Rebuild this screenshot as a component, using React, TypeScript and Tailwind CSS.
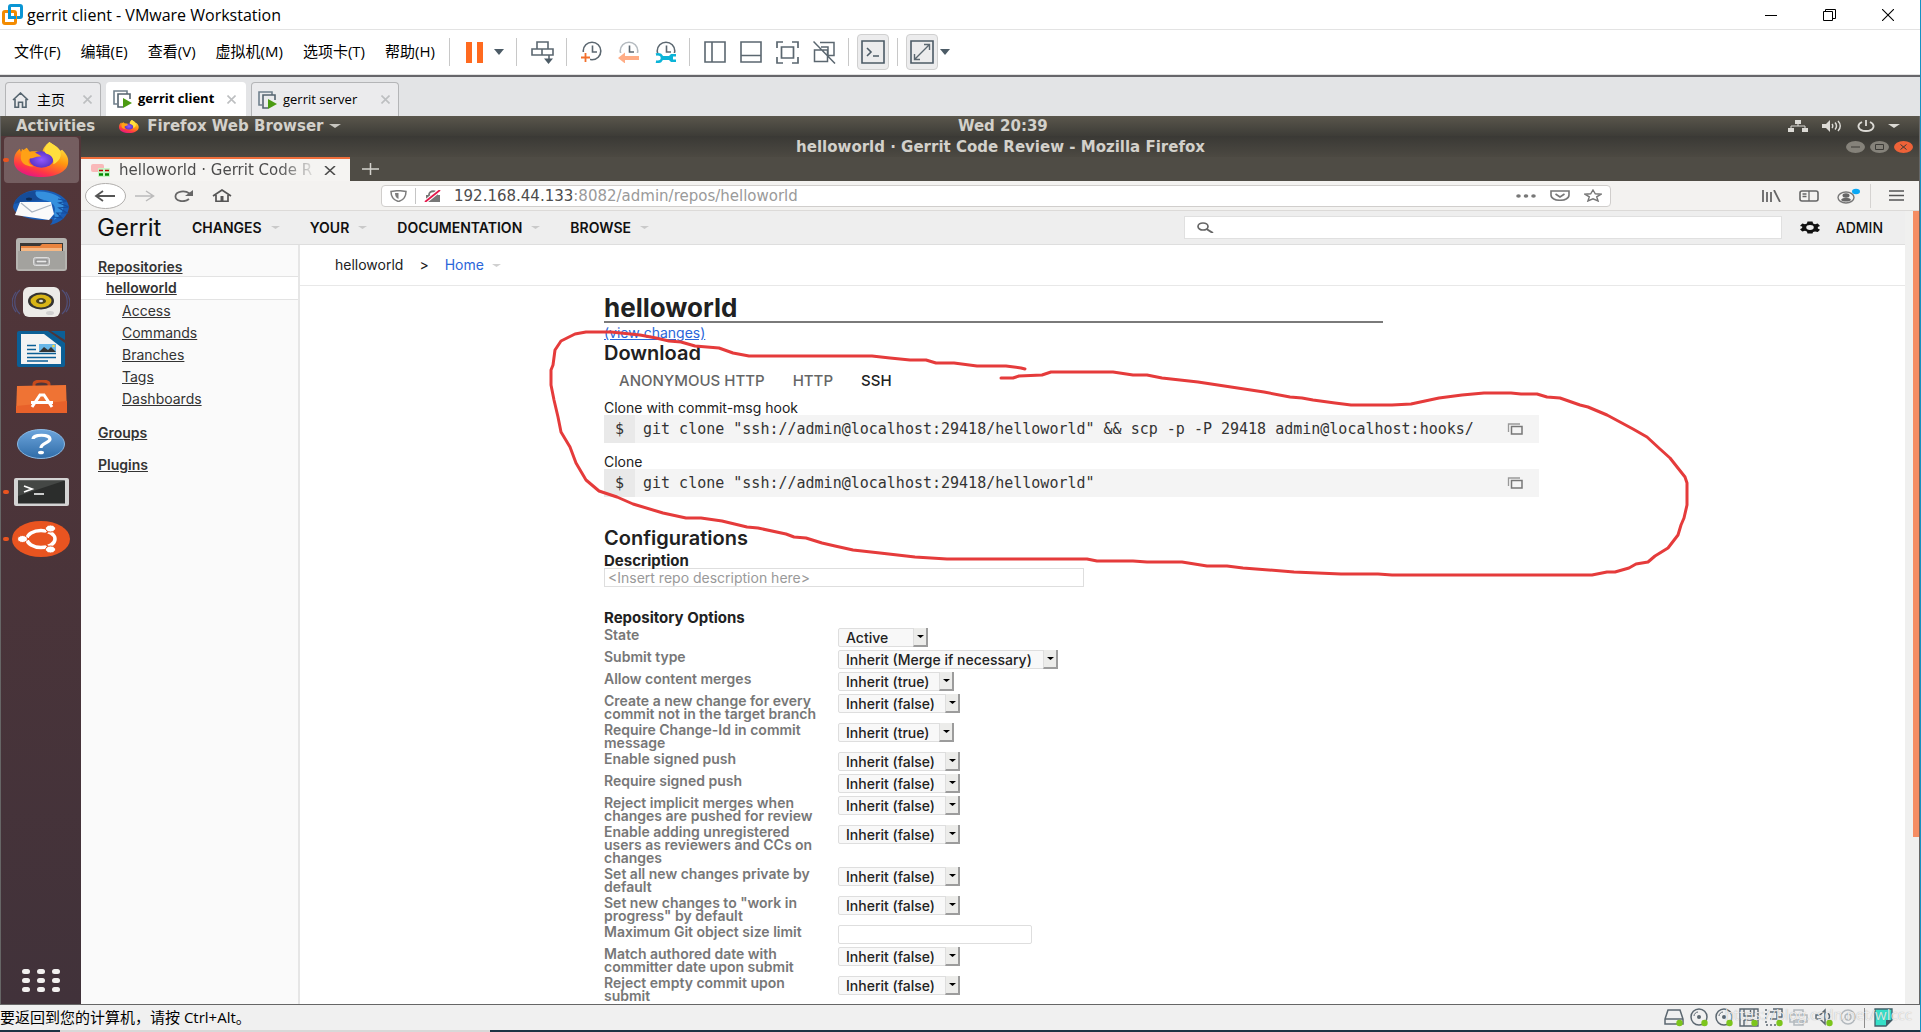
import type { ReactNode } from 'react';

const TOOL = '#5b6770';

const menus = ['文件(F)', '编辑(E)', '查看(V)', '虚拟机(M)', '选项卡(T)', '帮助(H)'];

const booleanOptions = ['Inherit (false)', 'Inherit (true)', 'true', 'false'];

type Option = { label: string; value?: string; width?: string };

const repoOptions: Option[] = [
  { label: 'State', value: 'Active', width: 'w-[90px]' },
  { label: 'Submit type', value: 'Inherit (Merge if necessary)', width: 'w-[220px]' },
  { label: 'Allow content merges', value: 'Inherit (true)', width: 'w-[116px]' },
  { label: 'Create a new change for every commit not in the target branch', value: 'Inherit (false)', width: 'w-[122px]' },
  { label: 'Require Change-Id in commit message', value: 'Inherit (true)', width: 'w-[116px]' },
  { label: 'Enable signed push', value: 'Inherit (false)', width: 'w-[122px]' },
  { label: 'Require signed push', value: 'Inherit (false)', width: 'w-[122px]' },
  { label: 'Reject implicit merges when changes are pushed for review', value: 'Inherit (false)', width: 'w-[122px]' },
  { label: 'Enable adding unregistered users as reviewers and CCs on changes', value: 'Inherit (false)', width: 'w-[122px]' },
  { label: 'Set all new changes private by default', value: 'Inherit (false)', width: 'w-[122px]' },
  { label: 'Set new changes to "work in progress" by default', value: 'Inherit (false)', width: 'w-[122px]' },
  { label: 'Maximum Git object size limit' },
  { label: 'Match authored date with committer date upon submit', value: 'Inherit (false)', width: 'w-[122px]' },
  { label: 'Reject empty commit upon submit', value: 'Inherit (false)', width: 'w-[122px]' },
];

function Svg({ w, h, children, box }: { w: number; h: number; children: ReactNode; box?: string }) {
  return (
    <svg width={w} height={h} viewBox={box ?? `0 0 ${w} ${h}`} preserveAspectRatio="none" fill="none" className="block shrink-0" aria-hidden="true">
      {children}
    </svg>
  );
}

function Caret({ color = '#d0d0d0', w = 9, h = 5 }: { color?: string; w?: number; h?: number }) {
  return (
    <Svg w={w} h={h} box="0 0 10 5">
      <path d="M0 0h10L5 5z" fill={color} />
    </Svg>
  );
}

function Separator() {
  return <div className="h-7 w-px shrink-0 bg-[#c8c8c8]" />;
}

/* ---------- VMware window ---------- */

function TitleBar() {
  return (
    <header className="flex h-[30px] shrink-0 items-center border-b border-[#e3e3e3] bg-white pl-0.5">
      <Svg w={21} h={21}>
        <rect x="7.5" y="1.5" width="12" height="12" rx="1.5" stroke="#0a95d4" strokeWidth="3" />
        <rect x="1.5" y="7.5" width="12" height="12" rx="1.5" stroke="#f38b00" strokeWidth="3" />
        <path d="M7.5 6v7.5H14" stroke="#0a95d4" strokeWidth="3" />
      </Svg>
      <h1 className="ml-1 grow text-base text-black">gerrit client - VMware Workstation</h1>
      <div className="flex items-center pr-[26px]">
        <button aria-label="Minimize" className="mr-[46px]">
          <Svg w={12} h={12}><path d="M0 6.5h12" stroke="#000" /></Svg>
        </button>
        <button aria-label="Restore" className="mr-[46px]">
          <Svg w={13} h={12}><path d="M.5 2.5h9v9h-9zM2.5 2.5v-2h10v9h-3" stroke="#000" /></Svg>
        </button>
        <button aria-label="Close">
          <Svg w={12} h={12}><path d="M0 0l12 12M12 0L0 12" stroke="#000" strokeWidth="1.1" /></Svg>
        </button>
      </div>
    </header>
  );
}

function Clock({ faded }: { faded?: boolean }) {
  return (
    <>
      <circle cx="11" cy="10" r="8.8" stroke={faded ? '#b5bbc0' : TOOL} strokeWidth="1.6" />
      <path d="M11.5 4.5V11h4.5" stroke={TOOL} strokeWidth="1.6" />
    </>
  );
}

function Toolbar() {
  return (
    <div className="flex h-[45px] shrink-0 items-center border-b border-[#e3e3e3] bg-white pl-3.5">
      <nav className="flex gap-5 pb-0.5 text-[15px] text-black">
        {menus.map((menu) => (
          <button key={menu}>{menu}</button>
        ))}
      </nav>
      <div className="ml-3.5 flex items-center">
        <Separator />
        <button aria-label="Pause" className="ml-4">
          <Svg w={18} h={21}><path d="M0 0h6v21H0zM11 0h6v21h-6z" fill="#ff6a1f" /></Svg>
        </button>
        <button aria-label="Power menu" className="mr-3 ml-2.5"><Caret color="#4c5b66" w={10} h={6} /></button>
        <Separator />
        <button aria-label="Send Ctrl+Alt+Del" className="mr-3 ml-3.5">
          <Svg w={23} h={23}>
            <path d="M6 1h11v7H6zM1 8h10v6H1zM11 8h11v6H11zM18 14v6" stroke={TOOL} strokeWidth="1.6" />
            <path d="M13 17.5h9L17.5 23z" fill="#4c5b66" />
          </Svg>
        </button>
        <Separator />
        <div className="mr-3 ml-3.5 flex gap-[15px]">
          <button aria-label="Take snapshot">
            <Svg w={22} h={22}>
              <Clock />
              <path d="M0 11h9v10H0z" fill="#fff" />
              <path d="M4.5 12v9M0 16.5h9" stroke="#f2702c" strokeWidth="1.8" />
            </Svg>
          </button>
          <button aria-label="Revert snapshot">
            <Svg w={22} h={22}>
              <Clock faded />
              <path d="M0 12h22v10H0z" fill="#fff" />
              <path d="M7 11.5V15h14v4H7v3.5L0 17z" fill="#ffad86" />
            </Svg>
          </button>
          <button aria-label="Manage snapshots">
            <Svg w={22} h={22}>
              <Clock />
              <path d="M0 12h22v10H0z" fill="#fff" />
              <path d="M1 13.500c4-1 6 1 6 3.500s-2 4.500-6 3.500" stroke="#0bb4d8" strokeWidth="2.600" />
              <path d="M7 15h7l2-2h5v2.500h-3v3h3V21h-5l-2-2H7z" fill="#0bb4d8" />
            </Svg>
          </button>
        </div>
        <Separator />
        <div className="mr-3 ml-3.5 flex gap-3.5">
          <button aria-label="Show library">
            <Svg w={22} h={22}><path d="M1 1h20v20H1zM8 1v20" stroke={TOOL} strokeWidth="1.6" /></Svg>
          </button>
          <button aria-label="Show thumbnails">
            <Svg w={22} h={22}><path d="M1 1h20v20H1zM1 14.500h20" stroke={TOOL} strokeWidth="1.6" /></Svg>
          </button>
          <button aria-label="Full screen">
            <Svg w={23} h={23}>
              <path d="M1 7V1h6M16 1h6v6M22 16v6h-6M7 22H1v-6M5.500 6h12v11h-12z" stroke={TOOL} strokeWidth="1.7" />
            </Svg>
          </button>
          <button aria-label="Unity">
            <Svg w={23} h={23}>
              <path d="M7 1.500h14v13h-6M1.500 9v11.500h13V9zM8 6h7v8M.500.500l21.500 22" stroke={TOOL} strokeWidth="1.5" />
            </Svg>
          </button>
        </div>
        <Separator />
        <button aria-label="Console view" className="mr-2 ml-2 rounded border border-[#d0d0d0] bg-[#ececed] px-[3px] py-[5px]">
          <Svg w={24} h={24}>
            <path d="M1 1h22v22H1z" stroke="#4c5b66" strokeWidth="1.6" />
            <path d="M6 8l4 4-4 4M12 16h6" stroke="#4c5b66" strokeWidth="1.6" />
          </Svg>
        </button>
        <Separator />
        <button aria-label="Stretch guest" className="mr-0.5 ml-2 rounded border border-[#d0d0d0] bg-[#ececed] px-[3px] py-[5px]">
          <Svg w={24} h={24}>
            <path d="M1 1h22v22H1z" stroke="#4c5b66" strokeWidth="1.6" />
            <path d="M14 4.500h5.500V10M10 19.500H4.500V14M19 5L5 19" stroke={TOOL} strokeWidth="1.4" />
          </Svg>
        </button>
        <button aria-label="Stretch menu"><Caret color="#4c5b66" w={10} h={6} /></button>
      </div>
    </div>
  );
}

function MachineIcon() {
  return (
    <Svg w={19} h={18}>
      <path d="M4 14H1V1h13v3" stroke="#70808c" strokeWidth="1.6" />
      <path d="M10 17H5V4h12v5" stroke="#55646f" strokeWidth="1.6" />
      <path d="M10 8l9 5-9 5z" fill="#4b9b12" />
    </Svg>
  );
}

function TabClose() {
  return (
    <button aria-label="Close tab">
      <Svg w={9} h={9}><path d="M.500.500l8 8M8.500.500l-8 8" stroke="#bdbfc1" strokeWidth="1.6" /></Svg>
    </button>
  );
}

function MachineTabs() {
  return (
    <div className="flex h-[41px] shrink-0 items-end border-t-2 border-[#66666a] bg-[#e3e4e6] pl-[5px] text-[13px] text-black">
      <div className="flex h-[34px] w-[96px] items-center rounded-t border border-b-0 border-[#b4b5b7] bg-[#ebebed] pr-2 pl-1.5">
        <Svg w={17} h={16}>
          <path d="M1 8l7.500-7L16 8M3 7v8.200h3.500v-5h4v5H14V7" stroke="#55646f" strokeWidth="1.6" />
        </Svg>
        <span className="ml-2 grow text-[14px]">主页</span>
        <TabClose />
      </div>
      <div className="ml-[5px] flex h-[34px] w-[140px] items-center rounded-t bg-white pr-2.5 pl-[7px] font-bold">
        <MachineIcon />
        <span className="ml-1.5 grow">gerrit client</span>
        <TabClose />
      </div>
      <div className="ml-[5px] flex h-[34px] w-[148px] items-center rounded-t border border-b-0 border-[#b4b5b7] bg-[#ebebed] pr-2 pl-1.5">
        <MachineIcon />
        <span className="ml-1.5 grow">gerrit server</span>
        <TabClose />
      </div>
    </div>
  );
}

/* ---------- Ubuntu guest ---------- */

function FirefoxLogo({ w, h }: { w: number; h: number }) {
  return (
    <Svg w={w} h={h} box="0 0 56 36">
      <defs>
        <linearGradient id="fx" x1="0.800" y1="0" x2="0.300" y2="1">
          <stop offset="0" stopColor="#fff04a" />
          <stop offset="0.450" stopColor="#ff980e" />
          <stop offset="0.800" stopColor="#ff3647" />
          <stop offset="1" stopColor="#e31587" />
        </linearGradient>
        <radialGradient id="fxCore">
          <stop offset="0" stopColor="#9059ff" />
          <stop offset="1" stopColor="#5b35c8" />
        </radialGradient>
      </defs>
      <path d="M36 0c4 3 9 5 11 9l2-1c5 5 7 9 6 14-1 8-12 14-27 14S0 30 0 20c0-6 2-10 6-13l1 3 6-4 3 4c5-1 9 0 13 1 0-4 3-8 7-11z" fill="url(#fx)" />
      <ellipse cx="28" cy="18" rx="12" ry="8.500" fill="url(#fxCore)" />
      <path d="M8 7c5 5 12 1 20 8-5-1-8 2-12 2-3 3 0 7 5 8-9 1-15-4-14-10z" fill="#ffa116" />
      <path d="M36 0c4 3 9 5 11 9 2 6-1 11-7 14 1-6-2-10-7-11-5-3 0-8 3-12z" fill="#ffdf3d" />
    </Svg>
  );
}

function TopBar() {
  return (
    <div className="grid h-5 shrink-0 grid-cols-[21fr_auto_19fr] items-center bg-linear-to-b from-[#5a564c] to-[#3d3c37] pr-[19px] pl-[15px] font-['DejaVu_Sans',sans-serif] text-[15px] leading-5 font-bold text-[#d3d1cb]">
      <div className="flex items-center">
        <button>Activities</button>
        <button className="ml-6 flex items-center">
          <FirefoxLogo w={20} h={13} />
          <span className="mr-1.5 ml-2">Firefox Web Browser</span>
          <Caret color="#c8c6c0" w={12} h={4} />
        </button>
      </div>
      <button>Wed 20:39</button>
      <div className="flex items-center justify-end">
        <Svg w={20} h={12} box="0 0 20 12">
          <path d="M7 0h6v4H7zM0 8h6v4H0zM14 8h6v4h-6z" fill="#dcdad5" />
          <path d="M10 4v2M3 8V6h14v2" stroke="#dcdad5" />
        </Svg>
        <div className="mr-[15px] ml-3.5">
          <Svg w={20} h={12}>
            <path d="M0 4h4l4-4v12L4 8H0z" fill="#dcdad5" />
            <path d="M10 4c1 1 1 3 0 4M13 2.500c2 2 2 5 0 7M16 1c3 3 3 7 0 10" stroke="#dcdad5" strokeWidth="1.500" />
          </Svg>
        </div>
        <Svg w={18} h={12}>
          <path d="M5 2C-1 5 1 11 9 11s10-6 4-9M9 0v6" stroke="#dcdad5" strokeWidth="1.800" />
        </Svg>
        <div className="ml-[13px]"><Caret color="#dcdad5" w={12} h={4} /></div>
      </div>
    </div>
  );
}

const dockApps: { name: string; active?: boolean; running?: boolean; icon: ReactNode }[] = [
  { name: 'Firefox', active: true, running: true, icon: <FirefoxLogo w={55} h={35} /> },
  {
    name: 'Thunderbird',
    icon: (
      <Svg w={58} h={35}>
        <path d="M1 17C2 8 12 1 24 0c18-1 32 7 33 17-1 9-8 16-19 18 2-2 3-4 2-6-12 3-37-1-39-12z" fill="#1a5db6" />
        <path d="M22 2c14-2 27 4 29 10 2 7-2 14-9 18 1-3 1-5 0-6 3-8-1-13-12-14-7-3-9-5-8-8z" fill="#3590de" />
        <path d="M46 9l9 2-8 2 10 4-10 1 8 5-10 0 5 5-9-1" stroke="#154d9c" strokeWidth="1.200" />
        <path d="M2 14C5 6 13 1 24 1c-2 4 2 8 8 9-10 1-17 1-22 2z" fill="#164c98" />
        <path d="M8 12l31 0 3 12-5 6-34-5z" fill="#fafafa" />
        <path d="M9 13l11 9 19-7" stroke="#aab4c0" strokeWidth="1.200" />
        <ellipse cx="17" cy="9" rx="3" ry="1.500" fill="#0c2b57" />
      </Svg>
    ),
  },
  {
    name: 'Files',
    icon: (
      <Svg w={51} h={33}>
        <rect width="51" height="33" rx="3" fill="#b5b4b0" />
        <rect x="4" y="5" width="43" height="11" fill="#3a3836" />
        <path d="M5 8h19l2-2h20v9H5z" fill="#e9843f" />
        <path d="M5 10h41v4H5z" fill="#f5b884" />
        <path d="M2 13h47v18H2z" fill="#a3a29e" />
        <rect x="17.500" y="19.500" width="16" height="8" rx="2" fill="#bbb" stroke="#dedede" />
        <rect x="20" y="22" width="11" height="3" fill="#e8e8e8" stroke="#777" />
      </Svg>
    ),
  },
  {
    name: 'Rhythmbox',
    icon: (
      <Svg w={58} h={32}>
        <path d="M8 4C1 10 1 22 8 28M4 6c-5 7-5 14 0 20M50 4c7 6 7 18 0 24M54 6c5 7 5 14 0 20" stroke="#50507a" strokeWidth="1.200" />
        <rect x="11" y="1" width="37" height="30" rx="6" fill="#ecebe8" />
        <ellipse cx="29" cy="15" rx="13" ry="8.500" fill="#333" />
        <ellipse cx="29" cy="15" rx="10.500" ry="6.500" fill="#d8b517" />
        <ellipse cx="29" cy="15" rx="5" ry="3" fill="#4a4420" />
        <ellipse cx="29" cy="15" rx="2" ry="1.200" fill="#ddd" />
        <ellipse cx="38" cy="27" rx="4" ry="2" fill="#d0d0d0" />
      </Svg>
    ),
  },
  {
    name: 'LibreOffice Writer',
    icon: (
      <Svg w={48} h={36}>
        <path d="M2 0h29l17 12v22a2 2 0 0 1-2 2H2a2 2 0 0 1-2-2V2a2 2 0 0 1 2-2z" fill="#0b5f96" />
        <path d="M34 0h14v9z" fill="#0b5f96" />
        <path d="M4 3h23l17 13v17H4z" fill="#f3f3f3" />
        <path d="M10 14.500h9M10 18.500h9M10 22.500h29M10 26.500h29M10 30h21" stroke="#0b5f96" strokeWidth="1.500" />
        <path d="M22 13h17v8H22z" fill="#69b7e8" />
        <path d="M22 21l5-5 4 3 3-3 5 5z" fill="#333" />
        <circle cx="36.500" cy="15" r="1.300" fill="#f5d742" />
      </Svg>
    ),
  },
  {
    name: 'Ubuntu Software',
    icon: (
      <Svg w={51} h={33}>
        <path d="M18 8V4c0-4 15-4 15 0v4" stroke="#c64a1c" strokeWidth="3" />
        <path d="M1 6l49-1 1 28H0z" fill="#ef7334" />
        <path d="M0 26l51-5v12H0z" fill="#e8612a" />
        <path d="M16 27l8-12h4l8 12M15 22.500h22" stroke="#fff" strokeWidth="3" />
      </Svg>
    ),
  },
  {
    name: 'Help',
    icon: (
      <Svg w={48} h={30}>
        <defs>
          <linearGradient id="help" x1="0" y1="0" x2="0" y2="1">
            <stop offset="0" stopColor="#6da5dc" />
            <stop offset="1" stopColor="#2f6ca8" />
          </linearGradient>
        </defs>
        <ellipse cx="24" cy="15" rx="23.500" ry="14.500" fill="url(#help)" stroke="#8ab8e2" />
        <path d="M16 10c0-5 17-5 17 0 0 4-9 4-9 9" stroke="#fff" strokeWidth="3.200" />
        <ellipse cx="24" cy="23.500" rx="3" ry="1.800" fill="#fff" />
      </Svg>
    ),
  },
  {
    name: 'Terminal',
    running: true,
    icon: (
      <Svg w={55} h={28}>
        <rect width="55" height="28" rx="2" fill="#d4d4d4" />
        <rect x="4" y="2.500" width="47" height="23" fill="#2b2d2c" />
        <path d="M4 2.500h47L4 18z" fill="#444745" />
        <path d="M10 8l8 3-8 3M20 16h10" stroke="#fff" strokeWidth="1.700" />
      </Svg>
    ),
  },
  {
    name: 'Ubuntu',
    running: true,
    icon: (
      <Svg w={58} h={36}>
        <ellipse cx="29" cy="18" rx="29" ry="18" fill="#e95420" />
        <ellipse cx="29" cy="18" rx="14" ry="8.500" stroke="#fff" strokeWidth="3.500" />
        <path d="M29 18H11M29 18l12-13M29 18l12 13" stroke="#e95420" strokeWidth="1.800" />
        <ellipse cx="10.500" cy="18" rx="5" ry="3.500" fill="#fff" stroke="#e95420" />
        <ellipse cx="38.500" cy="7.500" rx="5" ry="3.500" fill="#fff" stroke="#e95420" />
        <ellipse cx="38.500" cy="28.500" rx="5" ry="3.500" fill="#fff" stroke="#e95420" />
      </Svg>
    ),
  },
];

function Dock() {
  return (
    <aside className="flex w-20 shrink-0 flex-col justify-between bg-linear-to-b from-[#533639] to-[#41323a] pb-3">
      <ul className="grid h-[427px] auto-rows-fr">
        {dockApps.map((app) => (
          <li key={app.name} className="relative flex items-center justify-center">
            <button
              aria-label={app.name}
              className={app.active ? 'flex h-[46px] w-[75px] items-center justify-center rounded bg-white/20' : 'flex h-[46px] w-[75px] items-center justify-center'}
            >
              {app.icon}
            </button>
            {app.running && <span className="absolute left-0.5 h-1 w-1.5 rounded-full bg-[#e95420]" />}
          </li>
        ))}
      </ul>
      <button aria-label="Show applications" className="grid grid-cols-3 gap-x-[7px] gap-y-1 self-center">
        {Array.from({ length: 9 }, (_, i) => (
          <span key={i} className="h-[5px] w-2 rounded-full bg-[#f2f0ef]" />
        ))}
      </button>
    </aside>
  );
}

function FirefoxWindow({ children }: { children: ReactNode }) {
  return (
    <section className="flex min-w-0 grow flex-col bg-[#f3f2f0] font-['DejaVu_Sans',sans-serif]">
      <div className="flex h-[21px] shrink-0 items-center bg-linear-to-b from-[#3a3935] to-[#4c4942] pr-1.5">
        <div className="w-[74px]" />
        <h2 className="grow text-center text-[15px] leading-5 font-bold text-[#d3d1cb]">helloworld · Gerrit Code Review - Mozilla Firefox</h2>
        <div className="flex gap-[5px]">
          <button aria-label="Minimize window">
            <Svg w={19} h={12}>
              <ellipse cx="9.500" cy="6" rx="9.500" ry="6" fill="#85827a" />
              <path d="M5 6h9" stroke="#3c3b37" />
            </Svg>
          </button>
          <button aria-label="Maximize window">
            <Svg w={19} h={12}>
              <ellipse cx="9.500" cy="6" rx="9.500" ry="6" fill="#85827a" />
              <path d="M5.500 3.500h8v5h-8z" stroke="#3c3b37" />
            </Svg>
          </button>
          <button aria-label="Close window">
            <Svg w={19} h={12}>
              <ellipse cx="9.500" cy="6" rx="9.500" ry="6" fill="#ee6238" />
              <path d="M6.500 3.500l6 5M12.500 3.500l-6 5" stroke="#3c3b37" />
            </Svg>
          </button>
        </div>
      </div>

      <div className="flex h-6 shrink-0 items-center bg-[#4f4c45]">
        <div className="flex h-6 w-[269px] items-center border-t-2 border-[#f06f3c] bg-[#f5f4f2] px-2.5">
          <Svg w={20} h={13}>
            <rect width="13" height="8" rx="2" fill="#f9b9b9" />
            <rect x="7" y="4" width="12" height="9" rx="1" fill="#c5f5c5" />
            <path d="M8 6.500h4M14 6.500h4" stroke="#b00" strokeWidth="1.500" />
            <path d="M8 10.500h4M14 10.500h4" stroke="#080" strokeWidth="2.500" />
          </Svg>
          <span className="ml-2 min-w-0 grow overflow-hidden mask-r-from-80% text-[15px] leading-5 whitespace-nowrap text-[#4c4c4c]">helloworld · Gerrit Code R</span>
          <button aria-label="Close page tab" className="mr-1 ml-1.5">
            <Svg w={12} h={9}><path d="M1 0l10 9M11 0L1 9" stroke="#4c4c4c" strokeWidth="1.600" /></Svg>
          </button>
        </div>
        <button aria-label="New tab" className="ml-3">
          <Svg w={17} h={12}><path d="M8.500 0v12M0 6h17" stroke="#d5d3ce" strokeWidth="1.500" /></Svg>
        </button>
      </div>

      <div className="flex h-[30px] shrink-0 items-center border-b border-[#dcdad8] pl-1">
        <button aria-label="Back">
          <Svg w={41} h={26}>
            <ellipse cx="20.500" cy="13" rx="20" ry="12.500" fill="#fff" stroke="#b0aeac" />
            <path d="M30 13H12M18 8l-7 5 7 5" stroke="#555" strokeWidth="1.800" />
          </Svg>
        </button>
        <button aria-label="Forward" className="ml-[9px]">
          <Svg w={20} h={12}><path d="M0 6h18M11 1l7.500 5L11 11" stroke="#bbb" strokeWidth="1.500" /></Svg>
        </button>
        <button aria-label="Reload" className="ml-[19px]">
          <Svg w={20} h={12}>
            <path d="M15 9C10 13 1 11 1.500 6S11 0 15.500 3.500" stroke="#666" strokeWidth="1.800" />
            <path d="M19 0v6h-8z" fill="#666" />
          </Svg>
        </button>
        <button aria-label="Home" className="ml-[18px]">
          <Svg w={20} h={13}>
            <path d="M1 7l9-6 9 6M4 6v6.300h12V6" stroke="#555" strokeWidth="1.700" />
            <path d="M8.500 7h3v5h-3z" fill="#555" />
          </Svg>
        </button>
        <div className="ml-[149px] flex h-[22px] w-[1230px] items-center rounded-sm border border-[#d0cecc] bg-white px-2">
          <Svg w={17} h={12}>
            <path d="M1 1.500l7.500-1 7.500 1C16 7 14 10 8.500 11.500 3 10 1 7 1 1.500z" stroke="#7d7d7d" strokeWidth="1.500" />
            <path d="M8.500 3v6C6 8 5 6 5 3z" fill="#7d7d7d" />
          </Svg>
          <div className="mx-2 h-4 w-px bg-[#c5c5c5]" />
          <Svg w={18} h={12}>
            <path d="M2 5h14v7H2z" fill="#777" />
            <path d="M5 5c0-5 8-5 8 0" stroke="#777" strokeWidth="1.800" />
            <path d="M1 12L16 0" stroke="#fff" strokeWidth="4" />
            <path d="M1 12L16 0" stroke="#e3174a" strokeWidth="1.800" />
          </Svg>
          <div className="ml-3 grow text-[15px] leading-5 text-[#9a9a9a]">
            <span className="text-[#4c4c4c]">192.168.44.133</span>:8082/admin/repos/helloworld
          </div>
          <div className="flex items-center gap-3.5">
            <button aria-label="Page actions">
              <Svg w={20} h={4}>
                <ellipse cx="2.500" cy="2" rx="2.300" ry="1.800" fill="#777" />
                <ellipse cx="10" cy="2" rx="2.300" ry="1.800" fill="#777" />
                <ellipse cx="17.500" cy="2" rx="2.300" ry="1.800" fill="#777" />
              </Svg>
            </button>
            <button aria-label="Save to Pocket">
              <Svg w={20} h={11}>
                <path d="M1 1h18v4c0 7-18 7-18 0z" stroke="#777" strokeWidth="1.600" />
                <path d="M5.500 4l4.500 3 4.500-3" stroke="#777" strokeWidth="1.600" />
              </Svg>
            </button>
            <button aria-label="Bookmark">
              <Svg w={18} h={13}>
                <path d="M9 1l2.300 3.800 5.700.400-4.300 2.600 1.400 4.200L9 9.800 3.900 12l1.400-4.200L1 5.200l5.700-.400z" stroke="#777" strokeWidth="1.400" />
              </Svg>
            </button>
          </div>
        </div>
        <div className="flex grow items-center justify-end pr-[15px]">
          <button aria-label="Library">
            <Svg w={19} h={12}><path d="M1 0v12M5 2v10M9 2v10M12 0l6 12" stroke="#666" strokeWidth="1.800" /></Svg>
          </button>
          <button aria-label="Sidebars" className="ml-[18px]">
            <Svg w={20} h={12}>
              <rect x="1" y="1" width="18" height="10" rx="2" stroke="#666" strokeWidth="1.600" />
              <path d="M10 1v10M3.500 4h4M3.500 6.500h4" stroke="#666" strokeWidth="1.300" />
            </Svg>
          </button>
          <button aria-label="Account" className="ml-[18px]">
            <Svg w={23} h={16}>
              <ellipse cx="9" cy="9.500" rx="8" ry="5.500" stroke="#777" strokeWidth="1.400" />
              <ellipse cx="9" cy="7.500" rx="3.500" ry="2.200" fill="#666" />
              <path d="M4 12c1-3 9-3 10 0-2 2-8 2-10 0z" fill="#666" />
              <ellipse cx="19" cy="3.500" rx="4" ry="2.700" fill="#0aa8f5" />
            </Svg>
          </button>
          <div className="mr-[18px] ml-2.5 h-6 w-px bg-[#d5d3d1]" />
          <button aria-label="Open menu">
            <Svg w={15} h={11}><path d="M0 1h15M0 5.500h15M0 10h15" stroke="#555" strokeWidth="1.500" /></Svg>
          </button>
        </div>
      </div>
      {children}
    </section>
  );
}

/* ---------- Gerrit page ---------- */

function GerritHeader() {
  return (
    <header className="flex h-[34px] shrink-0 items-center border-b border-[#dedede] bg-[#eee] pl-4">
      <a href="#" className="w-[71px] text-2xl leading-6 text-[#111]">Gerrit</a>
      <nav className="ml-6 flex gap-[30px] text-sm font-semibold text-[#111]">
        {['CHANGES', 'YOUR', 'DOCUMENTATION', 'BROWSE'].map((item) => (
          <button key={item} className="flex items-center gap-[9px]">
            {item}
            <Caret color="#c9c9c9" w={9} h={3} />
          </button>
        ))}
      </nav>
      <form className="mr-[18px] ml-auto flex h-[23px] w-[598px] items-center border border-[#e0e0e0] bg-white pl-3">
        <Svg w={17} h={11}>
          <ellipse cx="6" cy="4.500" rx="5" ry="3.500" stroke="#666" strokeWidth="1.700" />
          <path d="M9.500 7l6.500 4" stroke="#666" strokeWidth="2" />
        </Svg>
        <input aria-label="Search" className="ml-2 min-w-0 grow text-sm outline-none" />
      </form>
      <button aria-label="Settings">
        <Svg w={20} h={13} box="0 0 24 24">
          <path
            fillRule="evenodd"
            d="M9 1h6l.7 3.500 2.300 1.300 3.300-1.200 2.700 4.400-2.600 2.300v2.400l2.600 2.300-2.700 4.400-3.300-1.200-2.300 1.300L15 23H9l-.7-3.500L6 18.200l-3.300 1.200L0 15l2.600-2.300v-2.400L0 9l2.700-4.400L6 5.800l2.300-1.300zM12 7.500a4.500 4.500 0 1 0 0 9 4.500 4.500 0 0 0 0-9z"
            fill="#111"
          />
        </Svg>
      </button>
      <a href="#" className="mr-[22px] ml-4 text-sm font-medium text-[#111]">ADMIN</a>
    </header>
  );
}

function Sidebar() {
  return (
    <nav className="w-[219px] shrink-0 border-r-2 border-[#e6e6e6] bg-[#fafafa] pt-3 text-sm text-[#333]">
      <a href="#" className="ml-[17px] block leading-[19px] font-semibold underline">Repositories</a>
      <a href="#" className="block h-6 border-y border-[#e3e3e3] bg-white pl-[25px] leading-[22px] font-semibold underline">helloworld</a>
      <ul className="pl-[41px] leading-[22px]">
        {['Access', 'Commands', 'Branches', 'Tags', 'Dashboards'].map((item) => (
          <li key={item}><a href="#" className="underline">{item}</a></li>
        ))}
      </ul>
      <a href="#" className="mt-3 ml-[17px] block leading-[22px] font-semibold underline">Groups</a>
      <a href="#" className="mt-2.5 ml-[17px] block leading-[22px] font-semibold underline">Plugins</a>
    </nav>
  );
}

function CloneCommand({ id, label, command }: { id: string; label: string; command: string }) {
  return (
    <div className="mt-[11px]">
      <label htmlFor={id} className="block text-sm leading-[15px]">{label}</label>
      <div className="flex h-7 w-[935px] items-center bg-[#f4f4f4] pr-[15px] font-['DejaVu_Sans_Mono',monospace] text-[15px] text-[#333]">
        <span className="flex h-7 w-[31px] items-center justify-center bg-[#e9e9e9]">$</span>
        <input id={id} readOnly value={command} className="mx-2 min-w-0 grow outline-none" />
        <button aria-label="Copy">
          <Svg w={17} h={12}>
            <path d="M1.500 9V1H13" stroke="#999" strokeWidth="1.300" />
            <rect x="4.500" y="3.500" width="10.500" height="7.500" stroke="#777" strokeWidth="1.500" />
          </Svg>
        </button>
      </div>
    </div>
  );
}

function OptionRow({ option, index }: { option: Option; index: number }) {
  const id = `option-${index}`;
  return (
    <div className="flex min-h-[22px] items-start pb-[3px]">
      <label htmlFor={id} className="w-[234px] shrink-0 pr-4 text-sm leading-[13px] font-semibold text-[#777]">{option.label}</label>
      {option.value ? (
        <div className="relative flex">
          <select
            id={id}
            defaultValue={option.value}
            className={`${option.width} h-[19px] appearance-none rounded-xs border border-[#dedede] bg-[#f8f8f8] pl-[7px] text-sm leading-[17px] font-medium text-[#222] outline-none`}
          >
            <option>{option.value}</option>
            {booleanOptions.filter((o) => o !== option.value).map((o) => (
              <option key={o}>{o}</option>
            ))}
          </select>
          <span className="pointer-events-none absolute top-0 right-0 flex h-[19px] w-[15px] items-center justify-center border-r-2 border-b-2 border-l border-[#9c9c9c] border-l-[#dedede] bg-[#ececea]">
            <Caret color="#000" w={7} h={3} />
          </span>
        </div>
      ) : (
        <input id={id} className="h-[19px] w-[194px] rounded-xs border border-[#dedede] bg-white px-2 text-sm outline-none" />
      )}
    </div>
  );
}

function RepoPage() {
  return (
    <main className="min-w-0 grow bg-white text-[#212121]">
      <div className="flex h-[41px] items-center border-b border-[#e8e8e8] pl-[35px] text-sm">
        <span>helloworld</span>
        <span className="mx-4">&gt;</span>
        <a href="#" className="mr-2 text-[#2a66d9]">Home</a>
        <Caret w={9} h={3} />
      </div>
      <div className="pt-[9px] pl-[304px]">
        <h1 className="w-[779px] border-b-2 border-[#7a7a7a] text-[26px] leading-[26px] font-bold">helloworld</h1>
        <a href="#" className="mt-0.5 block w-fit text-sm leading-4 text-[#2a66d9] underline">(view changes)</a>
        <h2 className="text-xl leading-6 font-semibold">Download</h2>
        <div className="mt-2 flex gap-7 pl-[15px] text-[15px] leading-4 font-medium text-[#666]">
          <button>ANONYMOUS HTTP</button>
          <button>HTTP</button>
          <button className="text-[#212121]">SSH</button>
        </div>
        <CloneCommand
          id="clone-hook"
          label="Clone with commit-msg hook"
          command={'git clone "ssh://admin@localhost:29418/helloworld" && scp -p -P 29418 admin@localhost:hooks/'}
        />
        <CloneCommand id="clone" label="Clone" command={'git clone "ssh://admin@localhost:29418/helloworld"'} />
        <h2 className="mt-[29px] text-xl leading-6 font-semibold">Configurations</h2>
        <label htmlFor="description" className="mt-[3px] block text-[15px] leading-[15px] font-bold">Description</label>
        <input
          id="description"
          placeholder="<Insert repo description here>"
          className="block h-[19px] w-[480px] border border-[#dedede] px-[3px] text-sm outline-none placeholder:text-[#999]"
        />
        <h3 className="mt-[23px] mb-[3px] text-[15px] leading-[15px] font-bold">Repository Options</h3>
        {repoOptions.map((option, index) => (
          <OptionRow key={option.label} option={option} index={index} />
        ))}
      </div>
    </main>
  );
}

/* Freehand marker stroke around the clone commands */
function Annotation() {
  return (
    <svg width="1150" height="256" viewBox="545 325 1150 256" fill="none" className="pointer-events-none absolute top-[325px] left-[545px]" aria-hidden="true">
      <polyline
        points="1025,369 1021,368 1006,366 977,366 954,363 936,363 926,360 910,360 890,358 872,356 749,356 733,353 719,348 695,346 681,342 669,341 656,338 640,335 611,332 586,332 575,334 561,341 555,350 553,365 551,370 551,385 554,400 558,417 561,432 570,447 576,463 586,480 599,491 617,497 633,504 663,513 686,518 701,518 722,521 747,527 758,528 786,534 794,537 806,538 822,543 835,546 853,550 880,553 915,557 947,559 1087,559 1097,561 1133,561 1147,562 1182,562 1207,566 1227,566 1243,568 1294,572 1341,574 1378,574 1392,575 1592,575 1607,572 1615,572 1629,568 1636,564 1648,562 1655,556 1668,548 1678,535 1681,525 1684,518 1687,505 1687,483 1685,477 1670,458 1660,449 1647,437 1633,429 1607,415 1588,407 1580,405 1560,398 1547,397 1537,394 1521,394 1511,393 1484,393 1462,395 1439,398 1411,404 1392,405 1351,405 1335,403 1313,400 1302,398 1290,397 1264,392 1231,387 1198,382 1162,378 1147,375 1133,375 1113,372 1051,372 1042,375 1019,376 1013,378 1001,378"
        stroke="#e53b3b"
        strokeWidth="3"
        strokeLinejoin="round"
        strokeLinecap="round"
      />
    </svg>
  );
}

/* ---------- Status bar ---------- */

function Device({ children, on = true }: { children: ReactNode; on?: boolean }) {
  return (
    <Svg w={20} h={19}>
      {children}
      {on && <circle cx="15.500" cy="15" r="3.200" fill="#7cc51c" />}
    </Svg>
  );
}

function StatusBar() {
  return (
    <footer className="relative flex h-[25px] shrink-0 items-center justify-between bg-[#f0f0f0] pr-[26px]">
      <p className="text-[15px] text-black">要返回到您的计算机，请按 Ctrl+Alt。</p>
      <div className="flex items-center gap-[5px]">
        <Device><path d="M4 2h12l3 9v5H1v-5zM1 11h18" stroke={TOOL} strokeWidth="1.500" /></Device>
        <Device>
          <circle cx="10" cy="9" r="8" stroke={TOOL} strokeWidth="1.500" />
          <circle cx="10" cy="9" r="2" fill={TOOL} />
          <path d="M5 8c0-2 2-4 4-4" stroke={TOOL} />
        </Device>
        <Device>
          <circle cx="10" cy="9" r="8" stroke={TOOL} strokeWidth="1.500" />
          <circle cx="10" cy="9" r="2" fill={TOOL} />
          <path d="M5 8c0-2 2-4 4-4" stroke={TOOL} />
        </Device>
        <Device><path d="M1 1h18v17H1zM5 1v7h10V1M11.500 2v4M5 18v-6h10" stroke={TOOL} strokeWidth="1.400" /></Device>
        <Device>
          <path d="M9 1h9v8h-4M6 4h7v7H6" stroke={TOOL} strokeWidth="1.500" />
          <path d="M2 1v16h12" stroke={TOOL} strokeWidth="1.500" strokeDasharray="2 2" />
        </Device>
        <Device on={false}><path d="M5 7V2h9v5M1 7h17v7H1zM5 12h9v5H5z" stroke="#b3b9be" strokeWidth="1.500" /></Device>
        <Device>
          <path d="M2 7h4l5-5v14l-5-5H2z" stroke={TOOL} strokeWidth="1.500" />
          <path d="M14 5c2 2 2 5 0 7" stroke={TOOL} strokeWidth="1.500" />
        </Device>
        <Device on={false}>
          <circle cx="9" cy="9" r="7" stroke="#b3b9be" strokeWidth="1.500" />
          <circle cx="9" cy="9" r="3" stroke="#b3b9be" strokeWidth="1.500" />
        </Device>
        <div className="mr-1 h-5 w-px bg-[#8d8d8d]" />
        <Device on={false}>
          <path d="M1 1h17v11l-6 6H1z" fill="#35e0c8" stroke="#42606a" strokeWidth="1.300" />
          <path d="M18 12h-6v6z" fill="#42606a" />
        </Device>
      </div>
      <span className="absolute right-2 bottom-2 text-[15px] leading-4 text-white/80 text-shadow-[0_0_1px_rgb(0_0_0/0.35)]">https://blog.csdn.net/wlccc</span>
    </footer>
  );
}

export default function App() {
  return (
    <div className="relative flex h-screen flex-col overflow-hidden border-r border-[#1591c4] bg-white font-['Open_Sans','Noto_Sans_CJK_SC',sans-serif]">
      <TitleBar />
      <Toolbar />
      <MachineTabs />
      <div className="flex min-h-0 grow flex-col overflow-hidden border-x border-b border-[#666]">
        <TopBar />
        <div className="flex min-h-0 grow">
          <Dock />
          <FirefoxWindow>
            <div className="flex min-h-0 grow overflow-hidden font-[Inter,sans-serif]">
              <div className="flex min-w-0 grow flex-col">
                <GerritHeader />
                <div className="flex min-h-0 grow overflow-hidden">
                  <Sidebar />
                  <RepoPage />
                </div>
              </div>
              <div className="w-3.5 shrink-0 bg-[#f0f0ef] pl-2">
                <div className="h-[79%] bg-[#f58d63]" />
              </div>
            </div>
          </FirefoxWindow>
        </div>
      </div>
      <StatusBar />
      <div className="flex h-0.5 shrink-0 bg-[#1e3344]">
        <div className="ml-[60px] w-[430px] bg-[#d8d8d8]" />
      </div>
      <Annotation />
    </div>
  );
}
